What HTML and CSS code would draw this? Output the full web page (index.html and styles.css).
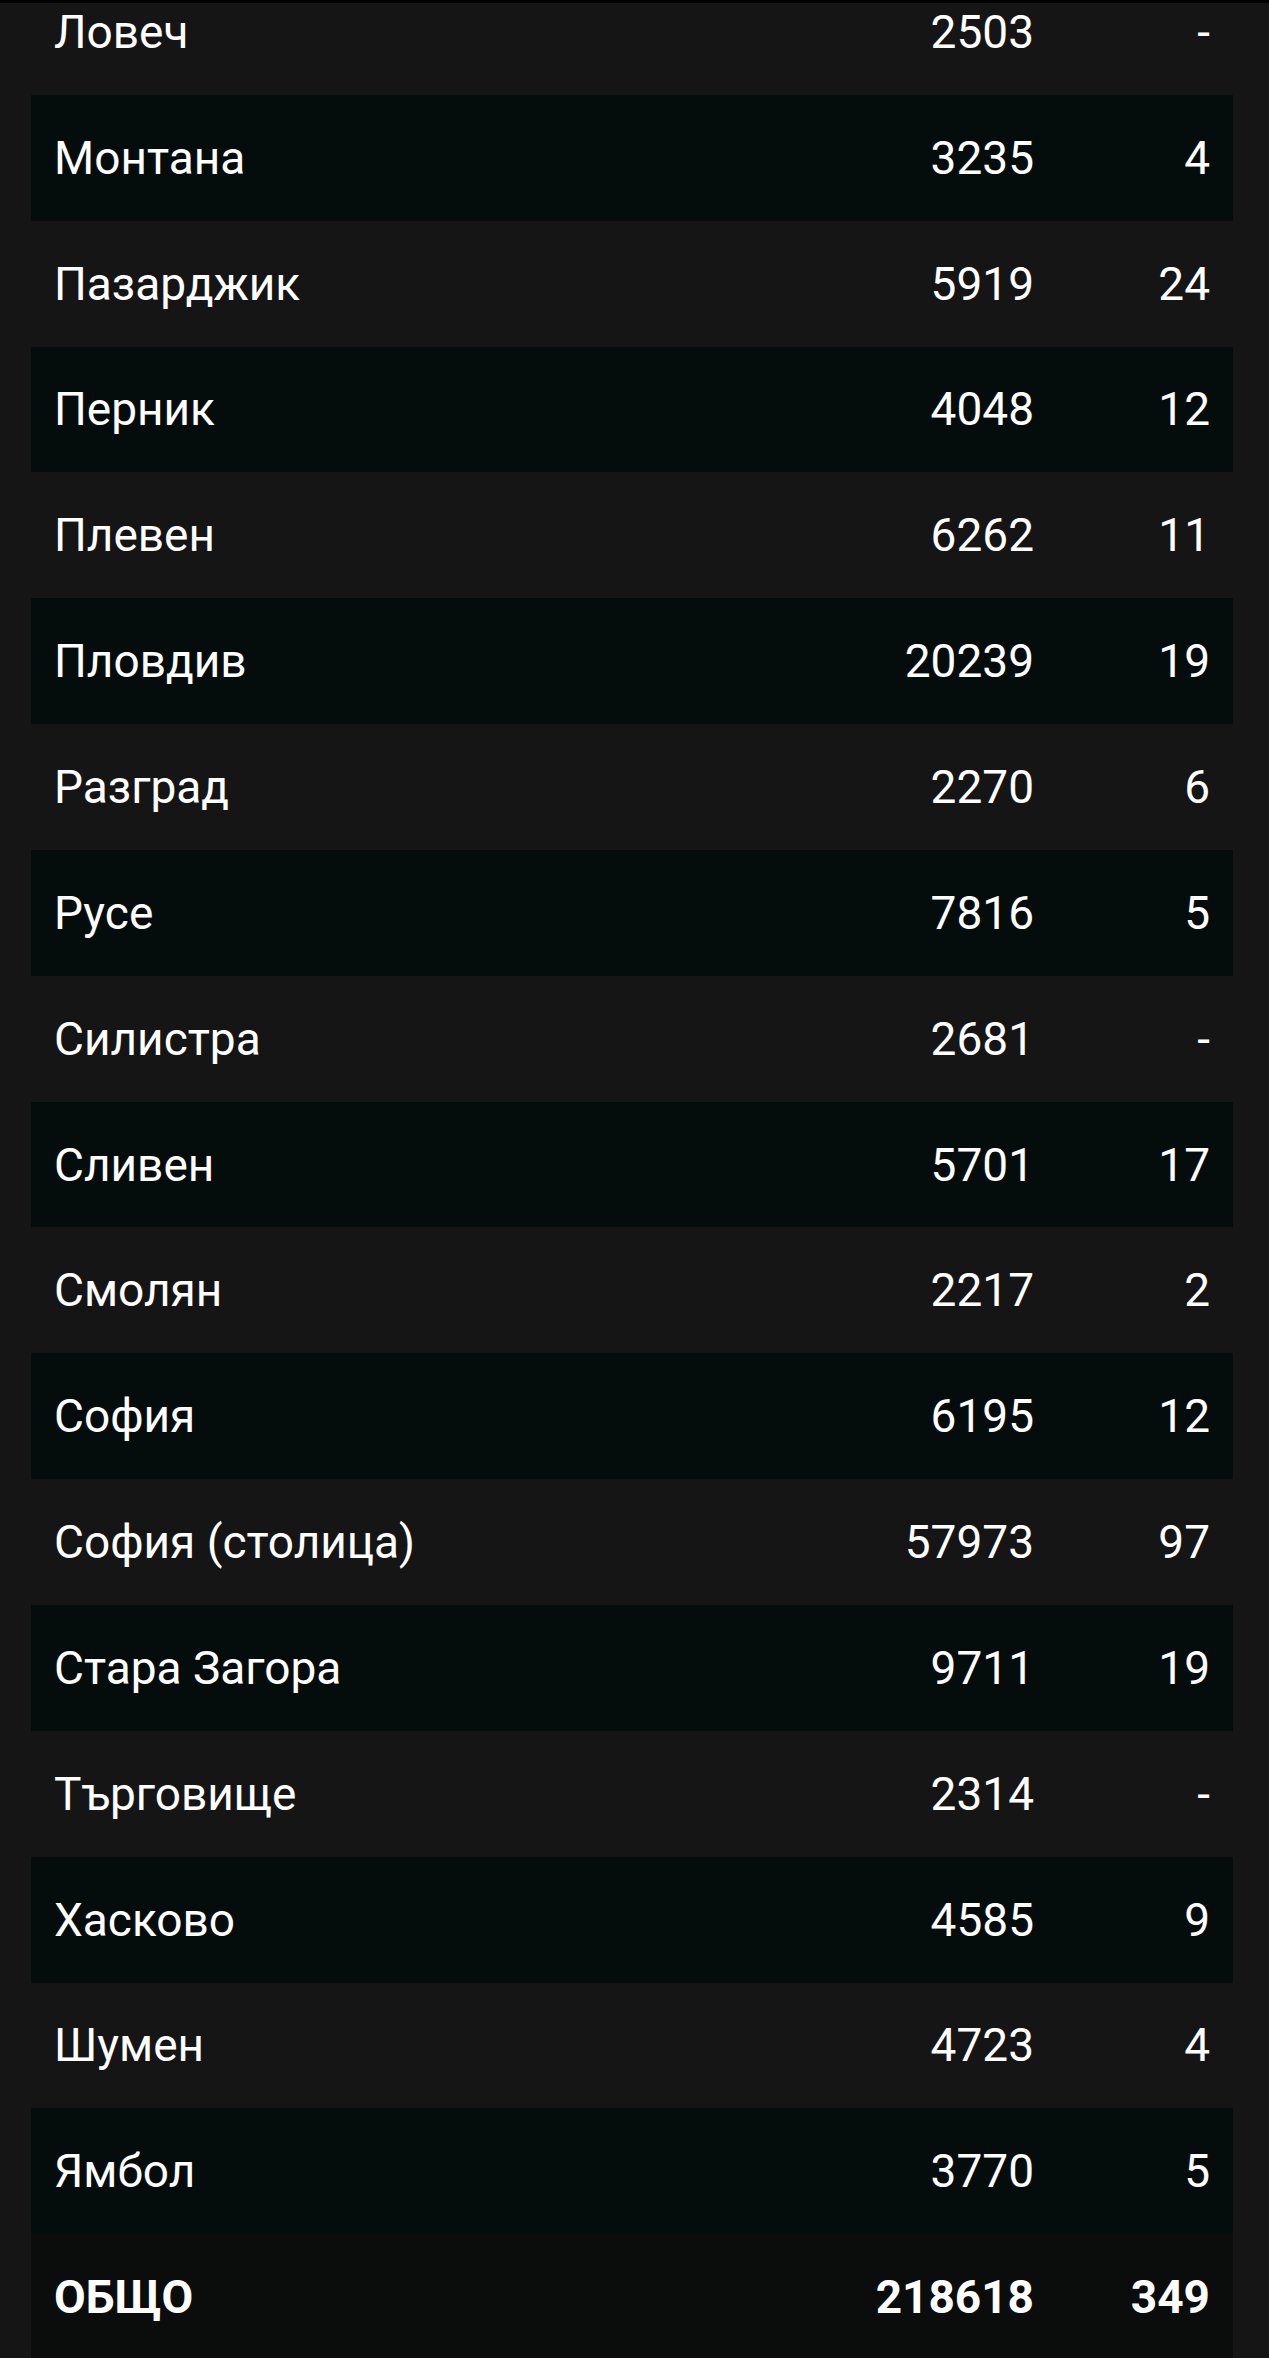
FILE: index.html
```html
<!DOCTYPE html>
<html lang="bg">
<head>
<meta charset="utf-8">
<title>Области</title>
<link rel="stylesheet" href="styles.css">
</head>
<body>
<div class="topbar"></div>
<div class="table">
  <div class="row"><span class="name">Ловеч</span><span class="num">2503</span><span class="num c3">-</span></div>
  <div class="row alt"><span class="name">Монтана</span><span class="num">3235</span><span class="num c3">4</span></div>
  <div class="row"><span class="name">Пазарджик</span><span class="num">5919</span><span class="num c3">24</span></div>
  <div class="row alt"><span class="name">Перник</span><span class="num">4048</span><span class="num c3">12</span></div>
  <div class="row"><span class="name">Плевен</span><span class="num">6262</span><span class="num c3">11</span></div>
  <div class="row alt"><span class="name">Пловдив</span><span class="num">20239</span><span class="num c3">19</span></div>
  <div class="row"><span class="name">Разград</span><span class="num">2270</span><span class="num c3">6</span></div>
  <div class="row alt"><span class="name">Русе</span><span class="num">7816</span><span class="num c3">5</span></div>
  <div class="row"><span class="name">Силистра</span><span class="num">2681</span><span class="num c3">-</span></div>
  <div class="row alt"><span class="name">Сливен</span><span class="num">5701</span><span class="num c3">17</span></div>
  <div class="row"><span class="name">Смолян</span><span class="num">2217</span><span class="num c3">2</span></div>
  <div class="row alt"><span class="name">София</span><span class="num">6195</span><span class="num c3">12</span></div>
  <div class="row"><span class="name">София (столица)</span><span class="num">57973</span><span class="num c3">97</span></div>
  <div class="row alt"><span class="name">Стара Загора</span><span class="num">9711</span><span class="num c3">19</span></div>
  <div class="row"><span class="name">Търговище</span><span class="num">2314</span><span class="num c3">-</span></div>
  <div class="row alt"><span class="name">Хасково</span><span class="num">4585</span><span class="num c3">9</span></div>
  <div class="row"><span class="name">Шумен</span><span class="num">4723</span><span class="num c3">4</span></div>
  <div class="row alt"><span class="name">Ямбол</span><span class="num">3770</span><span class="num c3">5</span></div>
  <div class="row total"><span class="name">ОБЩО</span><span class="num">218618</span><span class="num c3">349</span></div>
</div>
</body>
</html>
```
FILE: styles.css
```css
html, body {
  margin: 0;
  padding: 0;
  background: #151515;
  overflow: hidden;
}
body {
  height: 2358px;
  font-family: Roboto, "Noto Sans", sans-serif;
  color: #ffffff;
}
.topbar {
  position: fixed;
  top: 0;
  left: 0;
  right: 0;
  height: 3px;
  background: #000000;
  z-index: 2;
}
.table {
  margin: -31px 36px 0 31px;
  display: flex;
  flex-direction: column;
}
.row {
  height: 125.85px;
  display: grid;
  grid-template-columns: 1fr auto 176px;
  align-items: center;
  padding: 0 23px 0 23px;
  font-size: 46px;
  line-height: 1;
}
.row.alt {
  background: #050d0c;
}
.row.total {
  background: #0b0c0c;
  font-weight: 700;
}
.name {
  white-space: nowrap;
}
.num {
  text-align: right;
}
```
